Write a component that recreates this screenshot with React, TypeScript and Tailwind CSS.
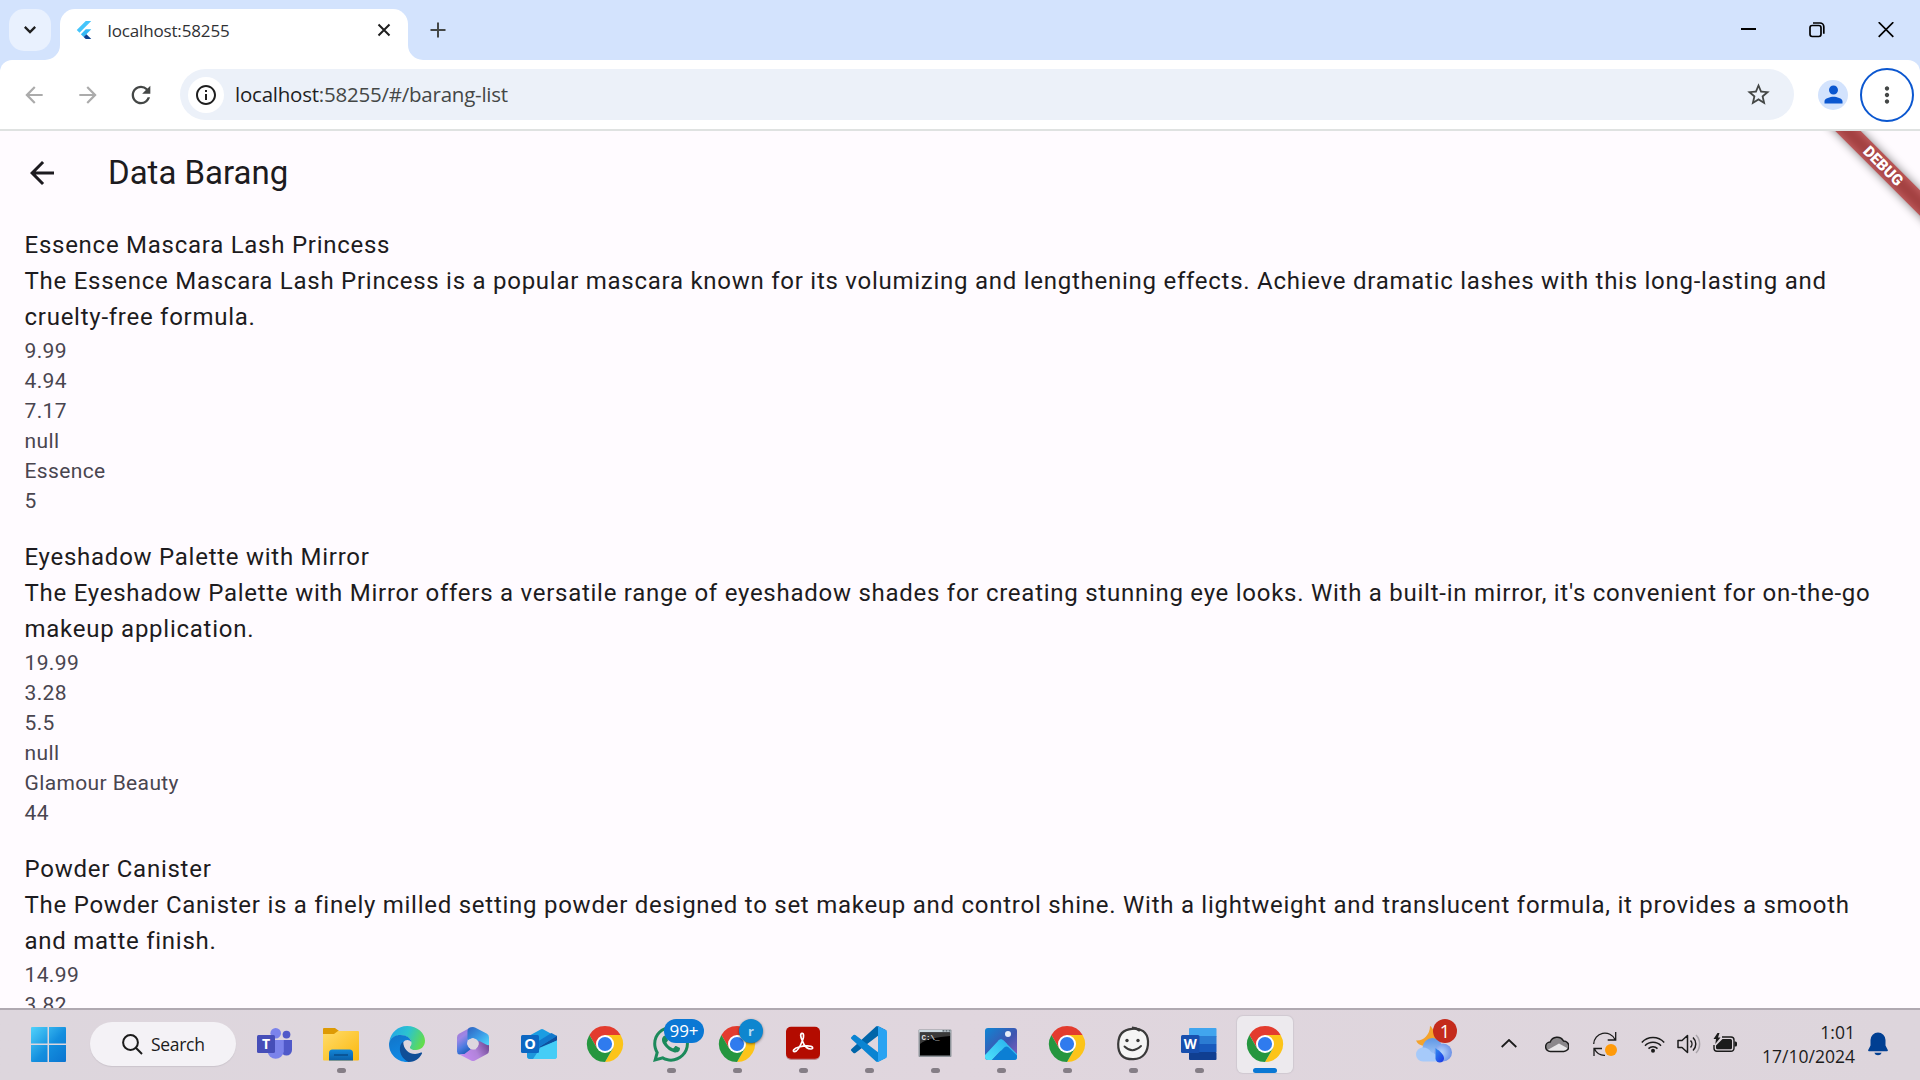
import React from "react";
import { FaWhatsapp } from "react-icons/fa";
import {
  MdArrowBack,
  MdArrowForward,
  MdInfoOutline,
  MdMoreVert,
  MdPerson,
  MdRefresh,
  MdStarBorder,
} from "react-icons/md";

type Product = { title: string; description: string; details: string[] };

const products: Product[] = [
  {
    title: "Essence Mascara Lash Princess",
    description:
      "The Essence Mascara Lash Princess is a popular mascara known for its volumizing and lengthening effects. Achieve dramatic lashes with this long-lasting and cruelty-free formula.",
    details: ["9.99", "4.94", "7.17", "null", "Essence", "5"],
  },
  {
    title: "Eyeshadow Palette with Mirror",
    description:
      "The Eyeshadow Palette with Mirror offers a versatile range of eyeshadow shades for creating stunning eye looks. With a built-in mirror, it's convenient for on-the-go makeup application.",
    details: ["19.99", "3.28", "5.5", "null", "Glamour Beauty", "44"],
  },
  {
    title: "Powder Canister",
    description:
      "The Powder Canister is a finely milled setting powder designed to set makeup and control shine. With a lightweight and translucent formula, it provides a smooth and matte finish.",
    details: ["14.99", "3.82"],
  },
];

function FlutterLogo() {
  return (
    <svg viewBox="0 0 24 24" className="h-[18px] w-[18px]">
      <path fill="#45c5fb" d="M14.3 0L2.3 12 6 15.7 21.7 0z" />
      <path fill="#35b8f5" d="M14.3 11.07L7.86 17.53l3.7 3.7 10.14-10.16z" />
      <path fill="#0b3f8f" d="M11.56 21.23L14.33 24h7.37l-6.46-6.47z" />
    </svg>
  );
}

function TabStrip() {
  return (
    <div className="flex h-[60px] shrink-0 items-start bg-[#d3e3fd] pt-[9px]">
      <div className="ml-[9px] flex h-[42px] w-[42px] items-center justify-center rounded-[15px] bg-[#e9f1fe]">
        <svg viewBox="0 0 12 8" className="h-2 w-3" fill="none" stroke="#1f1f1f" strokeWidth="2.3">
          <path d="M0.8 0.9L6 6.1L11.2 0.9" />
        </svg>
      </div>
      <svg viewBox="0 0 15 15" className="ml-[-6px] h-[15px] w-[15px] self-end">
        <path fill="#fff" d="M15 0v15H0A15 15 0 0 0 15 0z" />
      </svg>
      <div className="flex h-[51px] w-[348px] items-center rounded-t-[15px] bg-white pb-[9px] pl-[15px] pr-[16px]">
        <FlutterLogo />
        <span className="ml-[14.5px] flex-1 whitespace-nowrap pt-[2px] text-[17px] leading-6 tracking-[-0.15px] text-[#303134]">
          localhost:58255
        </span>
        <svg viewBox="0 0 14 14" className="mr-[1px] h-[14px] w-[14px]" fill="none" stroke="#1f1f1f" strokeWidth="2">
          <path d="M1.5 1.5l11 11M12.5 1.5l-11 11" />
        </svg>
      </div>
      <svg viewBox="0 0 15 15" className="h-[15px] w-[15px] self-end">
        <path fill="#fff" d="M0 0v15h15A15 15 0 0 1 0 0z" />
      </svg>
      <svg viewBox="0 0 16 16" className="ml-[7px] mt-[13px] h-4 w-4" fill="none" stroke="#444746" strokeWidth="2">
        <path d="M8 0.5v15M0.5 8h15" />
      </svg>
      <div className="ml-auto mr-[26px] flex items-start pt-[13px]">
        <svg viewBox="0 0 15 16" className="mr-[53px] h-4 w-[15px]" stroke="#000" strokeWidth="2">
          <path d="M0 7h15" />
        </svg>
        <svg viewBox="0 0 16 16" className="mr-[53px] h-4 w-4" fill="none" stroke="#000" strokeWidth="1.7">
          <rect x="1" y="3.5" width="11" height="11" rx="2.2" />
          <path d="M4 1h7a3.8 3.8 0 0 1 3.8 3.8v7" />
        </svg>
        <svg viewBox="0 0 16 16" className="h-4 w-4" fill="none" stroke="#000" strokeWidth="1.7">
          <path d="M0.7 0.2l14.600 14.600M15.300 0.200L0.700 14.800" />
        </svg>
      </div>
    </div>
  );
}

function Toolbar() {
  return (
    <div className="shrink-0 bg-[#d3e3fd]">
      <div className="flex h-[71px] items-center rounded-t-[12px] border-b-2 border-[#dfe2e1] bg-white">
        <MdArrowBack className="ml-[21px] h-[26px] w-[26px] text-[#ababab]" />
        <MdArrowForward className="ml-[28px] h-[26px] w-[26px] text-[#ababab]" />
        <MdRefresh className="ml-[26px] h-7 w-7 text-[#444746]" />
        <div className="ml-[25px] flex h-[51px] flex-1 items-center rounded-full bg-[#ecf1f9] pl-2 pr-[22px]">
          <div className="flex h-9 w-9 items-center justify-center rounded-full bg-white">
            <MdInfoOutline className="h-6 w-6 text-[#1f1f1f]" />
          </div>
          <span className="ml-[11px] flex-1 whitespace-nowrap pb-[2px] text-[20.5px] leading-7 tracking-[-0.23px] text-[#444746]">
            <span className="text-[#1f1f1f]">localhost</span>:58255/#/barang-list
          </span>
          <MdStarBorder className="h-[27px] w-[27px] text-[#444746]" />
        </div>
        <div className="ml-6 flex h-[30px] w-[30px] items-center justify-center rounded-full bg-[#d3e3fd]">
          <MdPerson className="h-[27px] w-[27px] text-[#0b57d0]" />
        </div>
        <div className="ml-3 mr-[6px] flex h-[54px] w-[54px] items-center justify-center rounded-full border-[2.5px] border-[#0b57d0]">
          <MdMoreVert className="h-[26px] w-[26px] text-[#444746]" />
        </div>
      </div>
    </div>
  );
}

function DebugBanner() {
  return (
    <div className="absolute right-0 top-0 h-[126px] w-[126px] overflow-hidden">
      <div className="absolute left-[-11px] top-[26px] h-[18px] w-[200px] rotate-45 bg-black/50 blur-[5px]" />
      <div className="absolute left-[-11px] top-[26px] flex h-[18px] w-[200px] rotate-45 items-center justify-center bg-[#b71c1c]/63 font-['Roboto',sans-serif] text-[15.3px] font-black leading-[18px] text-white">
        DEBUG
      </div>
    </div>
  );
}

function AppPage() {
  return (
    <main className="relative min-h-0 flex-1 overflow-hidden bg-[#fffbff] font-['Roboto',sans-serif]">
      <header className="flex h-[84px] items-center pl-6">
        <MdArrowBack className="h-9 w-9 text-[#1d1b20]" />
        <h1 className="ml-12 text-[33px] leading-[42px] text-[#1d1b20]">Data Barang</h1>
      </header>
      {products.map((p) => (
        <section key={p.title} className="pb-[11px] pl-[24.5px] pr-[35px] pt-3">
          <div className="text-2xl leading-9 tracking-[0.74px] text-[#1d1b20]">
            <h2>{p.title}</h2>
            <p>{p.description}</p>
          </div>
          <div className="pt-px text-[21px] leading-[30px] tracking-[0.375px] text-[#49454f]">
            {p.details.map((d, i) => (
              <p key={i}>{d}</p>
            ))}
          </div>
        </section>
      ))}
      <DebugBanner />
    </main>
  );
}

const iconSize = "h-9 w-9 overflow-visible";

function ChromeIcon() {
  return (
    <svg viewBox="0 0 36 36" className={iconSize}>
      <path fill="#e33b2e" d="M2.4 9A18 18 0 0 1 33.6 9H18L10.2 22.5z" />
      <path fill="#fcc419" d="M33.6 9A18 18 0 0 1 18 36L25.8 22.5L18 9z" />
      <path fill="#25963f" d="M18 36A18 18 0 0 1 2.4 9L10.2 22.5H25.8z" />
      <circle cx="18" cy="18" r="9" fill="#fff" />
      <circle cx="18" cy="18" r="7.1" fill="#2f7bee" />
    </svg>
  );
}

function TeamsIcon() {
  return (
    <svg viewBox="0 0 36 36" className={iconSize}>
      <circle cx="29.5" cy="8.6" r="3.9" fill="#5059c9" />
      <path fill="#5059c9" d="M24 14h11v10a5.5 5.5 0 0 1-11 0z" />
      <circle cx="18.7" cy="7.2" r="5.3" fill="#7b83eb" />
      <path fill="#7b83eb" d="M10.5 14h16.3v11.5a8.2 8.2 0 0 1-16.3 0z" />
      <rect x="0" y="9" width="18" height="18" rx="1.5" fill="#464eb8" />
      <text x="9" y="22.8" textAnchor="middle" fontSize="14" fontWeight="700" fill="#fff" fontFamily="Open Sans, sans-serif">
        T
      </text>
    </svg>
  );
}

function ExplorerIcon() {
  return (
    <svg viewBox="0 0 36 36" className={iconSize}>
      <defs>
        <linearGradient id="folder" x1="0" y1="0" x2="1" y2="1">
          <stop offset="0" stopColor="#ffdc6b" />
          <stop offset="1" stopColor="#fbb80d" />
        </linearGradient>
        <linearGradient id="folderBase" x1="0" y1="0" x2="0" y2="1">
          <stop offset="0" stopColor="#1387d8" />
          <stop offset="1" stopColor="#0b5fa8" />
        </linearGradient>
      </defs>
      <path fill="#dd9a04" d="M0 3a1 1 0 0 1 1-1h11l4 3v6H0z" />
      <path fill="url(#folder)" d="M0 8h11l4-3h20a1 1 0 0 1 1 1v27.5a1 1 0 0 1-1 1H1a1 1 0 0 1-1-1z" />
      <path fill="url(#folderBase)" d="M6 34.5V27a3.5 3.5 0 0 1 3.5-3.5h17A3.5 3.5 0 0 1 30 27v7.500z" />
      <path stroke="#084d8a" strokeWidth="1.5" d="M11 29h14" />
    </svg>
  );
}

function EdgeIcon() {
  return (
    <svg viewBox="0 0 36 36" className={iconSize}>
      <defs>
        <linearGradient id="edgeTop" x1="0" y1="0.2" x2="1" y2="0.5">
          <stop offset="0" stopColor="#22a5e8" />
          <stop offset="0.5" stopColor="#2cc3cf" />
          <stop offset="1" stopColor="#62dc4d" />
        </linearGradient>
        <linearGradient id="edgeLeft" x1="0" y1="0" x2="0.4" y2="1">
          <stop offset="0" stopColor="#1274c8" />
          <stop offset="1" stopColor="#0f8ae6" />
        </linearGradient>
      </defs>
      <path fill="url(#edgeTop)" d="M0.3 16C1.6 6.5 9 0 18 0c10.5 0 18 7.2 18 14.8 0 5.400-4 9.200-9 9.200-3.500 0-6-1.200-6-2.600 0-1.100 1.700-1.500 1.500-4.600C22.200 11.500 15 8.500 9 9.600 4.800 10.400 2 12.800.3 16z" />
      <path fill="url(#edgeLeft)" d="M.1 17C1.500 11.500 6.500 9 11.500 9c6 0 10.200 3 10.900 7-1.500-2-4.200-2.800-6.400-1.400-5 3-3.500 12 1.500 16 2.500 2 5 2.900 7.500 3.700C22.700 35.600 20 36 18 36 8 36-.8 27.500.1 17z" />
      <path fill="#104e97" d="M14.200 15.700C9 19 9.500 31 19.500 35.900c6 0 11.200-3.500 13.500-8.500.3-.8-.3-1.200-1-.8-8 3.900-17.500-.6-17.800-10.900z" />
    </svg>
  );
}

function Microsoft365Icon() {
  return (
    <svg viewBox="0 0 36 36" className={iconSize}>
      <defs>
        <linearGradient id="m365a" x1="0.2" y1="0" x2="0.6" y2="1">
          <stop offset="0" stopColor="#a978cf" />
          <stop offset="0.35" stopColor="#9b86e6" />
          <stop offset="0.7" stopColor="#4a7be0" />
          <stop offset="1" stopColor="#1c5cb8" />
        </linearGradient>
        <linearGradient id="m365b" x1="0" y1="0" x2="1" y2="1">
          <stop offset="0" stopColor="#2f62c0" />
          <stop offset="0.5" stopColor="#3a9ae6" />
          <stop offset="1" stopColor="#53e0fd" />
        </linearGradient>
        <linearGradient id="m365c" x1="0" y1="0.6" x2="1" y2="0.2">
          <stop offset="0" stopColor="#c58bf2" />
          <stop offset="0.5" stopColor="#b183da" />
          <stop offset="1" stopColor="#6e4692" />
        </linearGradient>
      </defs>
      <path fill="url(#m365a)" d="M15 1.700L4 7.800Q2 9 2 11.400V25.500Q2 28 4.500 28.500L12 28 16 23.500 12 18z" />
      <path fill="url(#m365b)" d="M12.500 13V5q0-4 5.500-4 1 0 2 .5l12 6.300q2 1.200 2 3.600V21L23 15.500 18 12l-5 2z" />
      <path fill="url(#m365c)" d="M34 20v4.500q0 2.300-2 3.500L20 34.500q-2 1-4 0L4.500 28.500q5 .5 7.500-2.500l4-3 4.500.5 3-5V14.500L31 18.500q2 1 3 .5z" />
      <circle cx="18" cy="17.800" r="5.600" fill="#ded7df" />
    </svg>
  );
}

function OutlookIcon() {
  return (
    <svg viewBox="0 0 36 36" className={iconSize}>
      <path fill="#1b9de2" d="M6 11L19.5 3.500q1.500-.8 3 0L36 11v14H6z" />
      <path fill="#0f4f9e" d="M18 21L36 9.500V15L20 25z" />
      <path fill="#1278cc" d="M16 16L30.500 7 36 10 18 21z" />
      <path fill="#3fc8f4" d="M6 27l30-12.500V30q0 3-3 3H9q-3 0-3-3z" />
      <path fill="#1d97dc" d="M6 25l13-3v11H9q-3 0-3-3z" />
      <path fill="#45cdf6" d="M19 22.500L36 14.500V30q0 3-3 3H12z" />
      <rect x="0" y="9" width="18" height="18" rx="1.5" fill="#0d67c2" />
      <text x="9" y="23" textAnchor="middle" fontSize="14.500" fontWeight="700" fill="#fff" fontFamily="Open Sans, sans-serif">
        O
      </text>
    </svg>
  );
}

function WhatsAppIcon() {
  return (
    <div className="relative h-9 w-9">
      <FaWhatsapp className="h-[41px] w-[41px] -translate-x-[2.5px] -translate-y-[2.5px] text-[#1c8a5b]" />
      <div className="absolute left-[11px] top-[-7px] flex h-6 w-10 items-center justify-center rounded-full bg-[#0a78d4] text-[17px] leading-6 text-white">
        99+
      </div>
    </div>
  );
}

function ChromeProfileIcon() {
  return (
    <div className="relative h-9 w-9">
      <ChromeIcon />
      <div className="absolute left-[20px] top-[-7px] flex h-6 w-6 items-center justify-center rounded-full bg-[#0d86cf] text-[13px] font-bold leading-6 text-[#b8dcf2] shadow-sm shadow-black/40">
        r
      </div>
    </div>
  );
}

function AcrobatIcon() {
  return (
    <svg viewBox="0 0 36 36" className={iconSize}>
      <rect x="1" y="2" width="34" height="32" rx="5" fill="#8a1414" opacity="0.4" />
      <rect x="1" y="0.8" width="34" height="32" rx="5" fill="#b30b00" />
      <path
        fill="none"
        stroke="#fff"
        strokeWidth="1.7"
        strokeLinejoin="round"
        d="M17.200 14.500C15.500 11 15 7.500 17 7.300s2 3.500.5 7.200C15.500 19.500 12.500 25.500 9.700 25.700 7 25.500 8.500 22.300 14 21c4.500-1.100 12-1.800 13.500.3 1 2-3 2.400-6 .2-2-1.500-3.200-3.800-4.300-7z"
      />
    </svg>
  );
}

function VSCodeIcon() {
  return (
    <svg viewBox="0 0 100 100" className={iconSize}>
      <path
        fill="#0065a9"
        d="M96.46 10.8L75.86.88a6.23 6.23 0 0 0-7.11 1.2L1.3 63.58a4.17 4.17 0 0 0 0 6.17l5.51 5a4.17 4.17 0 0 0 5.32.24L93.36 13.37C96.09 11.3 100 13.25 100 16.67v-.24a6.25 6.25 0 0 0-3.54-5.63z"
      />
      <path
        fill="#0a84d2"
        d="M96.46 89.2l-20.6 9.92a6.23 6.23 0 0 1-7.11-1.2L1.3 36.42a4.17 4.17 0 0 1 0-6.17l5.51-5a4.17 4.17 0 0 1 5.32-.24L93.36 86.63C96.09 88.7 100 86.75 100 83.33v.24a6.25 6.25 0 0 1-3.54 5.63z"
      />
      <path
        fill="#29a3f2"
        d="M75.86 99.13a6.23 6.23 0 0 1-7.11-1.21C71.06 100.22 75 98.59 75 95.33V4.67C75 1.41 71.06-.22 68.75 2.08A6.23 6.23 0 0 1 75.86.87l20.6 9.91A6.25 6.25 0 0 1 100 16.41v67.18a6.25 6.25 0 0 1-3.54 5.63z"
      />
    </svg>
  );
}

function TerminalIcon() {
  return (
    <svg viewBox="0 0 36 36" className={iconSize}>
      <rect x="1.5" y="3.500" width="33" height="27.500" rx="1" fill="#8d9399" />
      <rect x="2.200" y="4" width="31.600" height="2.400" fill="#cdd9e0" />
      <path stroke="#4b555c" strokeWidth="1.300" d="M25.500 4.800h2M28.500 4.800h2M31.500 4.800h2" />
      <rect x="3" y="6.500" width="30" height="23" fill="#000" />
      <path fill="#3a3a3a" d="M3 6.500h30v3.500C20 11 9 13 3 18z" />
      <text x="4.500" y="14" fontSize="7.500" fontWeight="700" fill="#e6e6e6" fontFamily="Liberation Mono, monospace">
        C:\_
      </text>
    </svg>
  );
}

function PhotosIcon() {
  return (
    <svg viewBox="0 0 36 36" className={iconSize}>
      <defs>
        <linearGradient id="photoSky" x1="0" y1="0" x2="1" y2="1">
          <stop offset="0" stopColor="#0f86d4" />
          <stop offset="0.55" stopColor="#3f55b0" />
          <stop offset="1" stopColor="#8a5fc0" />
        </linearGradient>
        <linearGradient id="photoHill" x1="1" y1="0" x2="0" y2="1">
          <stop offset="0" stopColor="#2ab4ee" />
          <stop offset="1" stopColor="#4fe3fb" />
        </linearGradient>
        <clipPath id="photoClip">
          <rect x="2" y="2" width="32" height="32" rx="3" />
        </clipPath>
      </defs>
      <g clipPath="url(#photoClip)">
        <rect x="2" y="2" width="32" height="32" fill="url(#photoSky)" />
        <path fill="#35bdf0" d="M15 15q3-3 6 0L36 30v4H20z" />
        <path fill="url(#photoHill)" d="M2 29L15.500 14.500q2.500-2.500 5 0L24 18 9 34H2z" />
        <path fill="#0c7fd4" d="M9 34L21.500 21.300q2-1.800 4 0L36 31.500V34z" />
        <circle cx="25" cy="8" r="3" fill="#e8edf7" />
      </g>
    </svg>
  );
}

function SmileyIcon() {
  return (
    <svg viewBox="0 0 36 36" className={iconSize}>
      <path
        fill="#f5f5f5"
        stroke="#3a3a3a"
        strokeWidth="2.2"
        d="M17 2.800C26 2 32.300 6 33 15c.5 11-5 18-14.500 18.200C8 33.500 3 28.500 3.200 18 3.400 9 7 3.500 17 2.800z"
      />
      <path stroke="#3a3a3a" strokeWidth="2.6" d="M17 1.800q4 0 8 2.800" fill="none" />
      <circle cx="12" cy="14.500" r="1.700" fill="#3a3a3a" />
      <circle cx="23" cy="14.500" r="1.700" fill="#3a3a3a" />
      <path fill="none" stroke="#3a3a3a" strokeWidth="1.9" strokeLinecap="round" d="M9.500 20.500q8 7.500 16.500-.5" />
    </svg>
  );
}

function WordIcon() {
  return (
    <svg viewBox="0 0 36 36" className={iconSize}>
      <rect x="8" y="2" width="27.500" height="9" rx="1" fill="#41a5ee" />
      <rect x="8" y="10" width="27.500" height="8" fill="#2b7cd3" />
      <rect x="8" y="26" width="27.500" height="8" rx="1" fill="#103f91" />
      <rect x="8" y="18" width="27.500" height="8" fill="#185abd" />
      <rect x="0" y="9" width="18.500" height="18" rx="1.500" fill="#184fae" />
      <text x="9.200" y="22.800" textAnchor="middle" fontSize="13.500" fontWeight="700" fill="#fff" fontFamily="Open Sans, sans-serif">
        W
      </text>
    </svg>
  );
}

const taskbarApps: { name: string; icon: React.ReactNode; running?: boolean; active?: boolean }[] = [
  { name: "Teams", icon: <TeamsIcon /> },
  { name: "File Explorer", icon: <ExplorerIcon />, running: true },
  { name: "Edge", icon: <EdgeIcon /> },
  { name: "Microsoft 365", icon: <Microsoft365Icon /> },
  { name: "Outlook", icon: <OutlookIcon /> },
  { name: "Chrome", icon: <ChromeIcon /> },
  { name: "WhatsApp", icon: <WhatsAppIcon />, running: true },
  { name: "Chrome profile", icon: <ChromeProfileIcon />, running: true },
  { name: "Acrobat", icon: <AcrobatIcon />, running: true },
  { name: "Visual Studio Code", icon: <VSCodeIcon />, running: true },
  { name: "Terminal", icon: <TerminalIcon />, running: true },
  { name: "Photos", icon: <PhotosIcon />, running: true },
  { name: "Chrome second", icon: <ChromeIcon />, running: true },
  { name: "Smiley", icon: <SmileyIcon />, running: true },
  { name: "Word", icon: <WordIcon />, running: true },
  { name: "Chrome window", icon: <ChromeIcon />, active: true },
];

function StartIcon() {
  return (
    <svg viewBox="0 0 35 35" className="mt-[-1px] ml-[31px] h-[35px] w-[35px]">
      <defs>
        <linearGradient id="start" gradientUnits="userSpaceOnUse" x1="0" y1="0" x2="35" y2="35">
          <stop offset="0" stopColor="#50d2fb" />
          <stop offset="0.55" stopColor="#138ede" />
          <stop offset="1" stopColor="#0a74d0" />
        </linearGradient>
      </defs>
      <path
        fill="url(#start)"
        d="M1 0h15.500v16.500H0V1a1 1 0 0 1 1-1zM18 0h16a1 1 0 0 1 1 1v15.500H18zM0 18h16.500v17H1a1 1 0 0 1-1-1zM18 18h17v16a1 1 0 0 1-1 1H18z"
      />
    </svg>
  );
}

function WeatherIcon() {
  return (
    <div className="relative h-9 w-9">
      <svg viewBox="0 0 36 36" className={iconSize}>
        <defs>
          <linearGradient id="cloudBack" x1="0" y1="0" x2="0" y2="1">
            <stop offset="0" stopColor="#5f96e4" />
            <stop offset="1" stopColor="#a9cdfa" />
          </linearGradient>
          <radialGradient id="cloudSide" cx="0.4" cy="0.5" r="0.6">
            <stop offset="0" stopColor="#b7d6fc" />
            <stop offset="1" stopColor="#6e92e6" />
          </radialGradient>
          <linearGradient id="drop" x1="0" y1="0" x2="1" y2="1">
            <stop offset="0" stopColor="#2f8cf0" />
            <stop offset="1" stopColor="#1b32e4" />
          </linearGradient>
        </defs>
        <path fill="#f4a32c" d="M14 0q1 0 2 2l6 10-8 8H8Q2 19 0 14.500 6 15 10 10.500 14 6 14 0z" />
        <circle cx="16.500" cy="22" r="10" fill="url(#cloudBack)" />
        <circle cx="27" cy="26.500" r="9" fill="url(#cloudSide)" />
        <path fill="#a6cafa" d="M7 21.500q5.500 0 8 4.500l6 3v6.500H7a7 7 0 0 1 0-14z" />
        <path fill="url(#drop)" d="M19.500 22c4 3 8.500 6.500 8.500 10.300a4.250 4.250 0 0 1-8.500 0z" />
      </svg>
      <div className="absolute left-[17px] top-[-7px] flex h-6 w-6 items-center justify-center rounded-full bg-[#c42b1c] text-[18px] leading-6 text-white">
        1
      </div>
    </div>
  );
}

function SystemTray() {
  return (
    <div className="ml-auto flex h-full items-center">
      <div className="mb-1 self-start pt-4">
        <WeatherIcon />
      </div>
      <svg viewBox="0 0 16 9" className="mb-[3px] ml-[49px] h-[9px] w-4" fill="none" stroke="#1b1b1b" strokeWidth="1.8">
        <path d="M0.7 8L8 1l7.300 7" />
      </svg>
      <svg viewBox="0 0 24 18" className="mb-[2px] ml-7 h-[18px] w-6">
        <path fill="#8b888b" d="M5.500 16.500a4.700 4.700 0 0 1-.3-9.400A7.300 7.300 0 0 1 18.500 6a5.200 5.200 0 0 1 .3 10.500z" />
        <path fill="#e8e6e8" d="M2.500 15L14 8.500l9 5q-1.500 3-4.500 3h-13q-2 0-3-1.500z" />
        <path
          fill="none"
          stroke="#1b1b1b"
          strokeWidth="1.5"
          d="M5.500 16.500a4.700 4.700 0 0 1-.3-9.400A7.300 7.300 0 0 1 18.500 6a5.200 5.200 0 0 1 .3 10.500z"
        />
      </svg>
      <svg viewBox="0 0 24 24" className="mb-[2px] ml-6 h-6 w-6" fill="none" stroke="#1b1b1b" strokeWidth="1.300">
        <path d="M.7 12A11.200 11.200 0 0 1 22 7.500M22.700 0v8h-8M1 24v-7.500h8M1.500 17a11.200 11.200 0 0 0 10.500 6.300" />
        <circle cx="18" cy="18" r="6" fill="#ff9a0a" stroke="none" />
      </svg>
      <svg viewBox="0 0 24 18" className="mb-[2px] ml-6 h-[18px] w-6" fill="none" stroke="#1b1b1b" strokeWidth="1.5">
        <path d="M.8 7.500a15.300 15.300 0 0 1 22.400 0M4 10.700a11 11 0 0 1 16 0M7.500 13.600a6.500 6.500 0 0 1 9 0" />
        <circle cx="12" cy="15.800" r="2" fill="#1b1b1b" stroke="none" />
      </svg>
      <svg viewBox="0 0 24 20" className="mb-[2px] ml-3 h-5 w-6" fill="none" stroke="#1b1b1b" strokeWidth="1.5">
        <path strokeLinejoin="round" d="M1 6.500h4L10.500 1.500v17L5 13.500H1z" />
        <path d="M13.500 6.500a5 5 0 0 1 0 7M16 3.500a9 9 0 0 1 0 13" />
        <path stroke="#a9a4aa" d="M19 1a13 13 0 0 1 0 18" />
      </svg>
      <svg viewBox="0 0 24 20" className="mb-[5px] ml-3 h-5 w-6">
        <path fill="none" stroke="#1b1b1b" strokeWidth="1.4" d="M9 4H18a3 3 0 0 1 3 3v8.300a3 3 0 0 1-3 3H4a3 3 0 0 1-3-3V12" />
        <path fill="#1b1b1b" d="M9.500 6H17.500A1.500 1.500 0 0 1 19 7.500v7.300a1.500 1.500 0 0 1-1.500 1.500h-13A1.500 1.500 0 0 1 3 14.800V12.500zM21.500 8.500h1a1.500 1.500 0 0 1 1.500 1.500v2a1.500 1.500 0 0 1-1.500 1.500h-1zM4.500 0L.5 6H3l-.7 5L7.500 4.500H5L6.500 0z" />
      </svg>
      <div className="ml-3 w-[106px] whitespace-nowrap pb-[3px] text-right text-[17.500px] leading-6 tracking-[0.02px] text-[#1b1b1b]">
        <div>1:01</div>
        <div>17/10/2024</div>
      </div>
      <svg viewBox="0 0 20 24" className="mb-[2px] ml-[13px] mr-8 h-6 w-5" fill="#003f92">
        <path d="M10 .5a7.500 7.500 0 0 1 7.500 7.500v5.500l2.300 4.500q.3 1.200-.8 1.200H1q-1.100 0-.8-1.200l2.300-4.500V8A7.500 7.500 0 0 1 10 .5zM6.300 20.700h7.400q-1 2.600-3.700 2.600t-3.700-2.600z" />
      </svg>
    </div>
  );
}

function Taskbar() {
  return (
    <footer className="flex h-[72px] shrink-0 items-center border-t-2 border-[#b0a9b1] bg-linear-to-r from-[#ddd6dd] via-[#e0d6de] to-[#ddd5dc]">
      <StartIcon />
      <div className="ml-6 mt-[-2px] flex h-11 w-[146px] items-center rounded-full bg-[#f4f2f6] pl-8 shadow-[0_1px_1px_#cbc5cc]">
        <svg viewBox="0 0 21 21" className="h-[21px] w-[21px]" fill="none" stroke="#1b1b1b" strokeWidth="2">
          <circle cx="8.500" cy="8.500" r="7.400" />
          <path d="M13.800 13.800l6.200 6.200" />
        </svg>
        <span className="ml-2 text-[17.5px] leading-6 tracking-[-0.3px] text-[#1b1b1b]">Search</span>
      </div>
      <nav className="ml-[6px] flex h-full">
        {taskbarApps.map((app) => (
          <div key={app.name} className="flex h-full w-[66px] justify-center pt-[6px]">
            <div
              className={
                app.active
                  ? "flex h-[57px] w-14 flex-col items-center rounded-md bg-[#edeaee] pt-[10px] shadow-[0_0_1px_1px_#d0c9d1]"
                  : "flex h-[57px] w-14 flex-col items-center pt-[10px]"
              }
            >
              {app.icon}
              {app.running && <div className="mt-[6px] h-[5px] w-[9px] rounded-full bg-[#857e86]" />}
              {app.active && <div className="mt-[6px] h-[5px] w-6 rounded-full bg-[#0a78d4]" />}
            </div>
          </div>
        ))}
      </nav>
      <SystemTray />
    </footer>
  );
}

export default function App() {
  return (
    <div className="flex h-[1080px] w-[1920px] flex-col overflow-hidden font-['Open_Sans',sans-serif]">
      <TabStrip />
      <Toolbar />
      <AppPage />
      <Taskbar />
    </div>
  );
}
